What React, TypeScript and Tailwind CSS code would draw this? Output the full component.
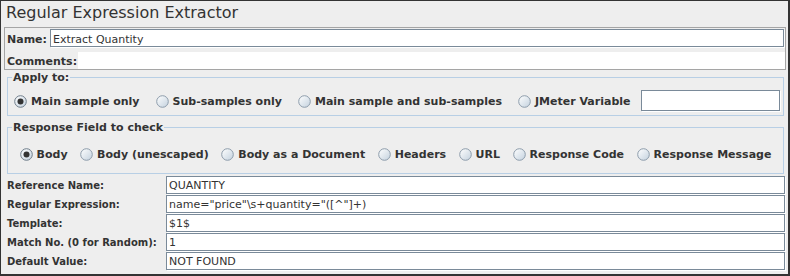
import type { ReactNode } from "react";

function Radio({ checked = false }: { checked?: boolean }) {
  return (
    <svg width="13" height="13" viewBox="0 0 13 13" className="shrink-0">
      <defs>
        <linearGradient id="radioFill" x1="0" y1="0" x2="1" y2="1">
          <stop offset="0" stopColor="#ffffff" />
          <stop offset="1" stopColor="#c3d1de" />
        </linearGradient>
      </defs>
      <circle cx="6.5" cy="6.5" r="5.8" fill="url(#radioFill)" stroke={checked ? "#6f7d8a" : "#8d9cab"} strokeWidth="1" />
      {checked && <circle cx="6.5" cy="6.5" r="3" fill="#333333" />}
    </svg>
  );
}

function Option({ label, checked }: { label: string; checked?: boolean }) {
  return (
    <div className="flex items-center gap-[4px]">
      <Radio checked={checked} />
      <span className="whitespace-nowrap text-[11px] font-bold leading-[13px]">{label}</span>
    </div>
  );
}

function Field({ value = "", className = "" }: { value?: string; className?: string }) {
  return (
    <div
      className={`mr-[1px] mb-[1px] flex h-[18px] items-center border border-[#7a8a99] bg-white pl-[2px] pt-[1px] text-[11px] leading-[13px] whitespace-nowrap shadow-[1px_1px_0_#ffffff] ${className}`}
    >
      {value}
    </div>
  );
}

function Group({ title, children, className = "" }: { title: string; children: ReactNode; className?: string }) {
  return (
    <fieldset className={`ml-[6px] mr-[4px] border border-[#b8cfe5] ${className}`}>
      <legend className="ml-[4px] px-[1px] text-[11px] font-bold leading-[13px]">{title}</legend>
      {children}
    </fieldset>
  );
}

const rows = [
  ["Reference Name:", "QUANTITY"],
  ["Regular Expression:", 'name="price"\\s+quantity="([^"]+)'],
  ["Template:", "$1$"],
  ["Match No. (0 for Random):", "1"],
  ["Default Value:", "NOT FOUND"],
];

export default function App() {
  return (
    <div className="flex h-[276px] w-[790px] flex-col border-t border-l border-r-2 border-b-2 border-[#333333] bg-[#eeeeee] font-['DejaVu_Sans',sans-serif] text-[#333333]">
      <div className="h-[26px] pl-[5px] text-[16px] leading-[23px]">Regular Expression Extractor</div>

      <div className="ml-[3px] mr-[2px] border border-[#a5a5a5]">
        <div className="flex h-[20px] items-start pt-[1px] pl-[2px]">
          <span className="w-[43px] pt-[4px] text-[11px] font-bold leading-[13px]">Name:</span>
          <Field value="Extract Quantity" className="flex-1 pt-[2px]" />
        </div>
        <div className="mt-[4px] flex h-[17px]">
          <span className="w-[73px] pl-[2px] pt-[3px] text-[11px] font-bold leading-[13px]">Comments:</span>
          <div className="flex-1 bg-white" />
        </div>
      </div>

      <Group title="Apply to:" className="mt-[1px]">
        <div className="mt-[5px] mb-[2px] flex h-[24px] items-center gap-[16px] pl-[6px]">
          <Option label="Main sample only" checked />
          <Option label="Sub-samples only" />
          <Option label="Main sample and sub-samples" />
          <div className="flex items-center gap-[10px]">
            <Option label="JMeter Variable" />
            <div className="mb-[1px] h-[21px] w-[139px] border border-[#7a8a99] bg-white shadow-[1px_1px_0_#ffffff]" />
          </div>
        </div>
      </Group>

      <Group title="Response Field to check" className="mt-[5px]">
        <div className="mt-[10px] mb-[9px] flex h-[20px] items-center justify-center gap-[12.5px]">
          <Option label="Body" checked />
          <Option label="Body (unescaped)" />
          <Option label="Body as a Document" />
          <Option label="Headers" />
          <Option label="URL" />
          <Option label="Response Code" />
          <Option label="Response Message" />
        </div>
      </Group>

      <div className="mt-[2px] ml-[6px] mr-[2px] flex flex-col">
        {rows.map(([label, value]) => (
          <div key={label} className="flex h-[19px] items-start">
            <span className="w-[159px] pt-[4px] text-[10px] font-bold leading-[12px] whitespace-nowrap">{label}</span>
            <Field value={value} className="flex-1" />
          </div>
        ))}
      </div>
    </div>
  );
}
